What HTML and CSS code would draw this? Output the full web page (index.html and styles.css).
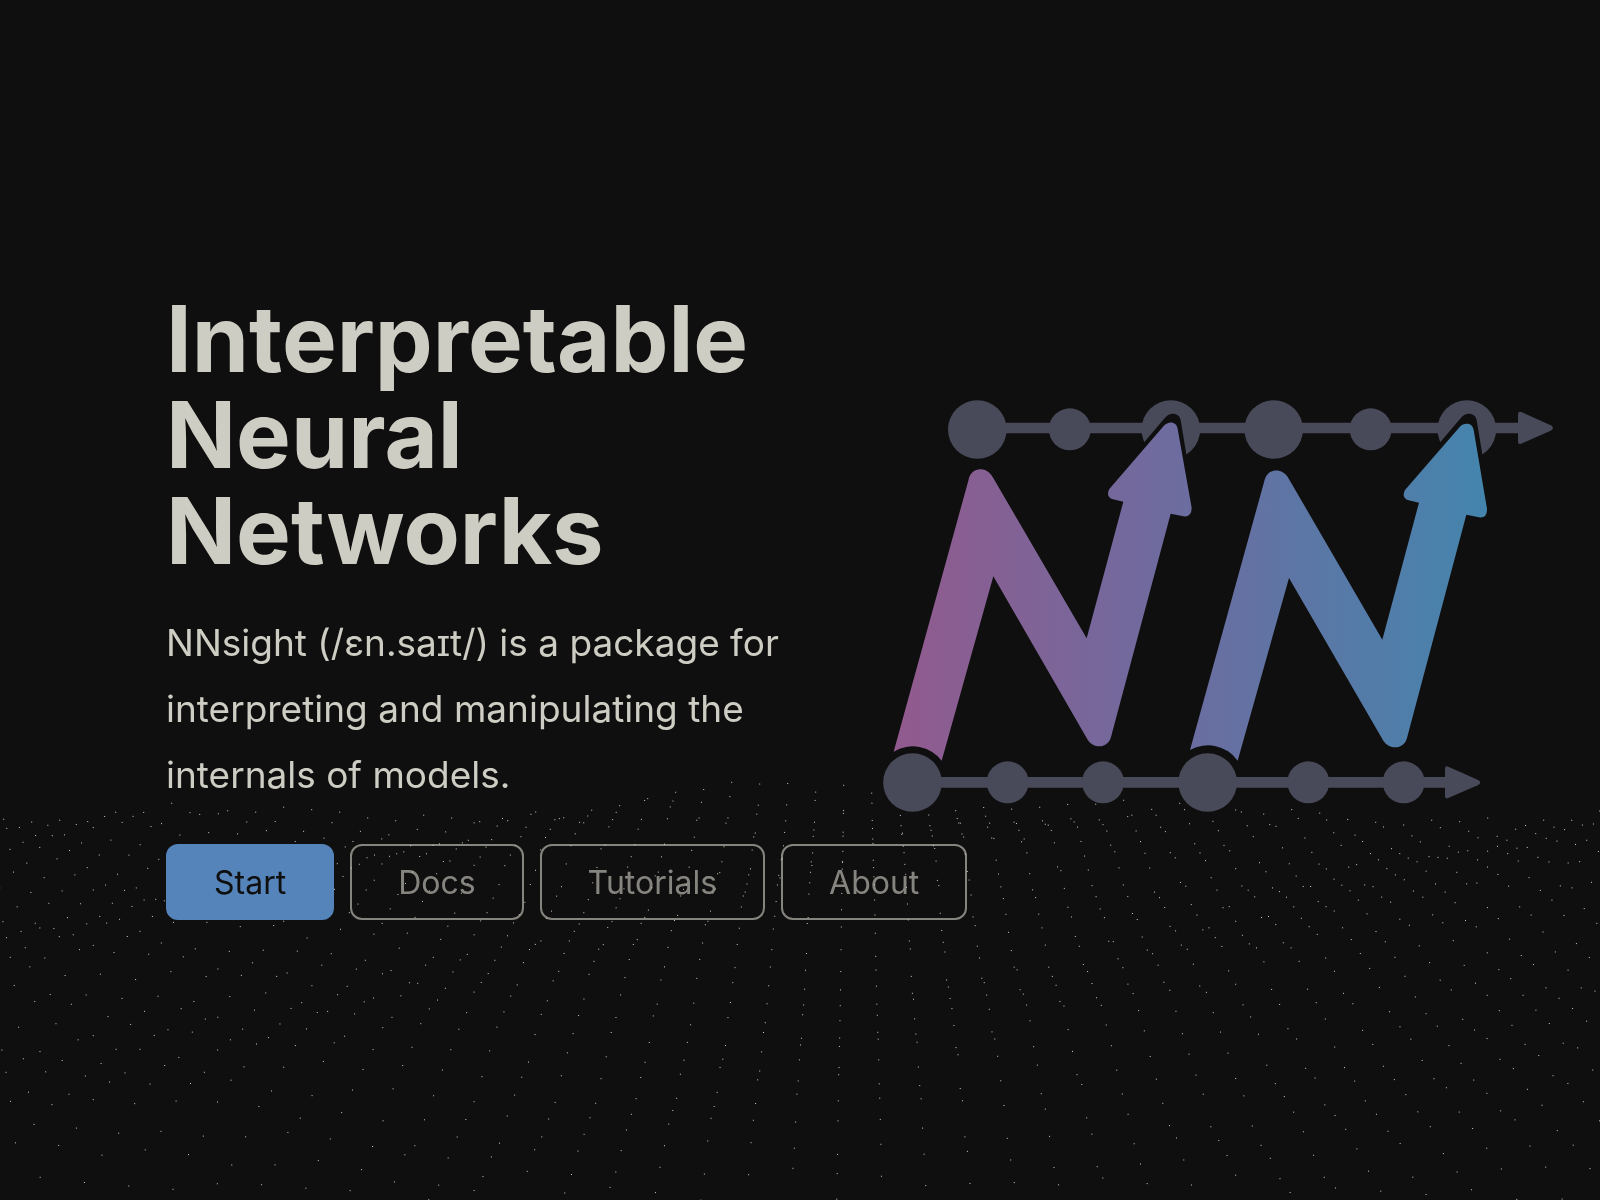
FILE: index.html
```html
<!DOCTYPE html>
<html lang="en">
<head>
<meta charset="utf-8">
<meta name="viewport" content="width=device-width, initial-scale=1">
<title>NNsight</title>
<link rel="stylesheet" href="styles.css">
</head>
<body>
<canvas class="waves" aria-hidden="true"></canvas>
<main class="hero">
  <section class="intro">
    <h1 class="title">Interpretable Neural Networks</h1>
    <p class="lead">NNsight (/ɛn.saɪt/) is a package for interpreting and manipulating the internals of models.</p>
    <nav class="actions">
      <a class="button button-primary" href="#start">Start</a>
      <a class="button" href="#docs">Docs</a>
      <a class="button" href="#tutorials">Tutorials</a>
      <a class="button" href="#about">About</a>
    </nav>
  </section>
  <svg class="logo" viewBox="69 57 2010 1236" role="img" aria-label="NNsight logo">
    <defs>
      <linearGradient id="ink" gradientUnits="userSpaceOnUse" x1="101" y1="0" x2="1881" y2="0">
        <stop offset="0" stop-color="#925a8e"/>
        <stop offset=".5" stop-color="#6b6da0"/>
        <stop offset="1" stop-color="#4485ad"/>
      </linearGradient>
    </defs>
    <g class="track">
      <path d="M352 125H1975V157H352Z"/>
      <path d="M1974 100Q1974 89 1984 93L2072 133Q2086 141 2072 149L1984 188Q1974 192 1974 182Z"/>
      <circle cx="352" cy="145.500" r="88"/>
      <circle cx="629.500" cy="145" r="63"/>
      <circle cx="932.500" cy="145.500" r="88"/>
      <circle cx="1241" cy="145.500" r="88"/>
      <circle cx="1532" cy="145" r="63"/>
      <circle cx="1820.500" cy="145.500" r="88"/>
      <path d="M157 1188H1756V1220H157Z"/>
      <path d="M1755 1163Q1755 1153 1765 1157L1853 1196Q1868 1204 1853 1213L1765 1251Q1755 1255 1755 1246Z"/>
      <circle cx="157.500" cy="1204.500" r="88"/>
      <circle cx="443" cy="1204" r="63"/>
      <circle cx="729" cy="1204" r="63"/>
      <circle cx="1043" cy="1204.500" r="88"/>
      <circle cx="1345" cy="1204" r="63"/>
      <circle cx="1631" cy="1204" r="63"/>
    </g>
    <g class="gap">
      <path d="M836 203L915 110C930 92 959 95 962 118L983 244H836Z"/>
      <path d="M1724 203L1803 110C1818 92 1847 95 1850 118L1871 244H1724Z"/>
    </g>
    <g fill="url(#ink)">
      <path d="M101 1112L325 299C332 256 380 255 398 288L680 772L790 362L759 355Q736 347 748 324L911 135C925 119 950 121 953 144L995 380Q995 409 970 406L932 398L753 1068C743 1104 701 1104 683 1076L400 586L245 1139A109 109 0 0 0 101 1112Z"/>
      <path d="M990 1107L1213 300C1222 259 1268 260 1285 291L1567 776L1677 365L1646 358Q1623 350 1635 327L1799 138C1812 124 1837 124 1841 147L1881 383Q1882 412 1857 409L1819 401L1641 1071C1631 1107 1589 1107 1570 1079L1287 591L1133 1139A109 109 0 0 0 990 1107Z"/>
    </g>
  </svg>
</main>
<script src="waves.js"></script>
</body>
</html>
```
FILE: styles.css
```css
* { box-sizing: border-box; }

body {
  margin: 0;
  background: #100f0f;
  color: #cecdc3;
  font-family: Inter, "Liberation Sans", sans-serif;
}

.waves {
  position: fixed;
  inset: 0;
  width: 100%;
  height: 100%;
}

.hero {
  position: relative;
  display: flex;
  align-items: center;
  justify-content: space-between;
  min-height: 100vh;
  padding: 11px 47px 0 166px;
}

.intro {
  position: relative;
  z-index: 1;
  flex: 1;
  min-width: 0;
}

.title {
  margin: 0 0 31px;
  max-width: 640px;
  font-size: 92px;
  font-weight: 700;
  line-height: 96px;
}

.lead {
  margin: 0 0 36px;
  max-width: 640px;
  font-size: 37px;
  line-height: 66px;
}

.actions {
  display: flex;
  gap: 16px;
}

.button {
  padding: 17px 46px 15px;
  border: 2px solid rgba(206, 205, 195, .62);
  border-radius: 12px;
  color: rgba(206, 205, 195, .62);
  font-size: 32px;
  line-height: 40px;
  text-decoration: none;
}

.button-primary {
  border-color: #5484ba;
  background: #5484ba;
  color: #100f0f;
}

.logo {
  flex: none;
  width: 42vw;
  max-width: 670px;
}

.track { fill: #484959; }

.gap { fill: #100f0f; }

@media (max-width: 1200px) {
  .hero {
    flex-direction: column;
    justify-content: center;
    gap: 48px;
    padding: 48px;
  }
  .intro { flex: none; }
  .actions { flex-wrap: wrap; }
  .logo { width: 100%; }
}
```
FILE: waves.js
```js
// Field of points in perspective, lifted by a swell and a little noise.
const canvas = document.querySelector(".waves");
const ctx = canvas.getContext("2d");

function noise(a, b) {
  const n = Math.sin(a * 127.1 + b * 311.7) * 43758.5453;
  return n - Math.floor(n) - 0.5;
}

function draw() {
  const w = canvas.width = window.innerWidth;
  const h = canvas.height = window.innerHeight;
  const scale = h / 1200;
  ctx.fillStyle = "#cecdc3";
  for (let row = 0; row < 27; row++) {
    const near = 28 * 68 / (68 - row);
    for (let col = -32; col < 32; col++) {
      const x = w * 0.534 + (col - 0.4) * near * scale;
      const d = (x - w * 0.52) / (w * 0.16);
      const fade = 1 - row / 27;
      const dip = 24 * fade * (1 - Math.exp(-d * d));
      const y = 131 + 23.6 * near + dip
        + 8 * Math.sin(col * 0.35 + row * 0.5)
        + 14 * noise(col, row);
      ctx.fillRect(x, y * scale, 1, 1);
    }
  }
}

window.addEventListener("resize", draw);
draw();
```
